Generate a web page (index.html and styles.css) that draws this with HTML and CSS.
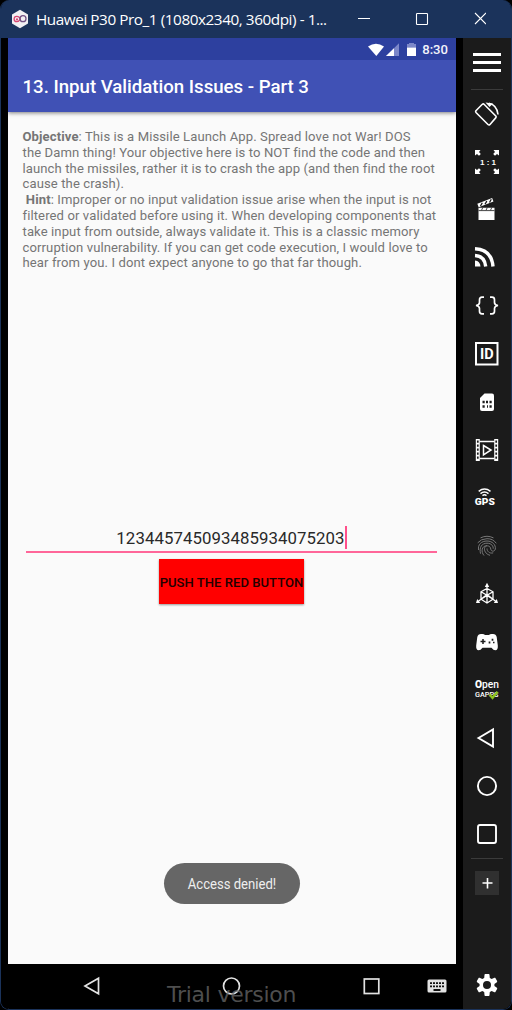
FILE: index.html
```html
<!DOCTYPE html>
<html lang="en">
<head>
<meta charset="utf-8">
<title>Huawei P30 Pro_1</title>
<link rel="stylesheet" href="styles.css">
</head>
<body>
<div class="window">
  <header class="titlebar">
    <svg class="logo" width="20" height="20" viewBox="0 0 20 20"><path d="M10 .8 18 5.4V14.6L10 19.2 2 14.6V5.4Z" fill="#f1f0f3"/><path d="M10.300 10.200C9.500 8 8.500 7.300 6.800 7.300a2.700 2.700 0 0 0 0 5.400c1.500 0 2.500-.8 3.500-2.500" fill="none" stroke="#d84772" stroke-width="1.300"/><circle cx="7" cy="10.400" r="1.100" fill="#d84772"/><circle cx="13" cy="9.700" r="3" fill="none" stroke="#725083" stroke-width="1.300"/></svg>
    <span class="caption">Huawei P30 Pro_1 (1080x2340, 360dpi) - 1...</span>
    <svg class="controls" width="128" height="14" viewBox="0 0 128 14" fill="none" stroke="#fff" stroke-width="1.100"><path d="M0 6.500H12M117 1l11 11M128 1l-11 11"/><rect x="58.500" y="1.500" width="11" height="11" rx=".7"/></svg>
  </header>
  <div class="body">
    <main class="screen">
      <div class="status">
        <svg width="50" height="16" viewBox="0 0 50 16"><path d="M0 3.500Q8-2 16 3.500L8.300 13Z" fill="#fff"/><path d="M18 13 31 .3V13Z" fill="#7c87c9"/><path d="M18 13 26 5.200V13Z" fill="#fff"/><path d="M39 1h2V0h5v1h2v3.500h-9Z" fill="#7c87c9"/><path d="M39 4.500h9V13h-9Z" fill="#fff"/></svg>
        <span class="clock">8:30</span>
      </div>
      <div class="appbar"><span class="apptitle">13. Input Validation Issues - Part 3</span></div>
      <div class="content">
        <p class="copy"><b>Objective</b>: This is a Missile Launch App. Spread love not War! DOS<br>the Damn thing! Your objective here is to NOT find the code and then<br>launch the missiles, rather it is to crash the app (and then find the root<br>cause the crash).<br>&nbsp;<b>Hint</b>: Improper or no input validation issue arise when the input is not<br>filtered or validated before using it. When developing components that<br>take input from outside, always validate it. This is a classic memory<br>corruption vulnerability. If you can get code execution, I would love to<br>hear from you. I dont expect anyone to go that far though.</p>
        <div class="field"><span class="value">123445745093485934075203</span><i class="caret"></i></div>
        <div class="push"><span>PUSH THE RED BUTTON</span></div>
        <div class="toast"><span>Access denied!</span></div>
      </div>
      <nav class="navbar">
        <svg width="448" height="45" viewBox="0 0 448 45" fill="none" stroke="#e2e2e2" stroke-width="1.700"><path d="M77 22 90.500 14.300V29.700Z"/><circle cx="223.500" cy="22" r="8"/><rect x="356.300" y="15" width="14.500" height="14.500"/><rect x="419.500" y="15.500" width="19" height="13" rx="1.500" fill="#e2e2e2" stroke="none"/><path d="M422 19.200h14M422 22.400h14" stroke="#111" stroke-dasharray="2 1"/><path d="M425.500 26h7" stroke="#111" stroke-width="1.800"/></svg>
        <span class="trial">Trial version</span>
      </nav>
    </main>
    <aside class="tools">
      <div class="menu"><svg width="28" height="20" viewBox="0 0 28 20"><path d="M0 0h28v3H0zM0 8h28v3H0zM0 16h28v3H0z" fill="#fff"/></svg></div>
      <div class="tool"><svg viewBox="0 0 24 24"><path d="M.9 8.700 7.300 2.300Q8.300 1.500 9.300 2.500L21 14.200Q21.500 15 20.700 15.900L14.800 22.700Q13.900 23.400 13 22.500L1 10.500Q.3 9.600.9 8.700Z"/><path d="M14 1.300Q22 3 23 12.500"/><path d="M10.500.5 18 1.500 14.500 5Z" fill="#fff" stroke="none"/></svg></div>
      <div class="tool"><svg viewBox="0 0 24 24"><path d="M0 0h5.500L4 2l1.800 2-1.800 1.800L2 4 0 5.500ZM24 0h-5.500L20 2l-1.800 2L20 5.800 22 4l2 1.500ZM0 24h5.500L4 22l1.800-2L4 18.200 2 20l-2-1.500ZM24 24h-5.500L20 22l-1.800-2 1.800-1.800L22 20l2-1.500Z" fill="#fff" stroke="none"/><text class="ratio" x="5" y="15">1 : 1</text></svg></div>
      <div class="tool"><svg viewBox="0 0 24 24"><path d="M3.500 9.700h16V22H3.500Z" fill="#fff" stroke="none"/><path d="M3 7.500 17.800 1.700" stroke-width="3.600"/><path d="m5.500 8 1.800-3.200M10 6.300l1.800-3.200M14.500 4.500 16.300 1.300" stroke="#1b1b1b" stroke-width="1.300"/><path d="m6.500 12.300 1.300-2.800M11 12.300l1.300-2.800M15.500 12.300l1.300-2.800M3.500 12.600h16" stroke="#333" stroke-width=".9"/></svg></div>
      <div class="tool"><svg viewBox="0 0 24 24"><g transform="translate(0 -2)"><g stroke-width="3.400"><path d="M0 4.700Q16.500 5.500 18 22.500M0 11.500Q9.700 12 10.700 22.500"/></g><path d="M0 16.500Q5 17 5.500 22.500H0Z" fill="#fff" stroke="none"/></g></svg></div>
      <div class="tool"><svg viewBox="0 0 24 24"><path d="M9 3.200H7Q4.500 3.200 4.500 5.700V8.500Q4.500 11 1 11.500 4.500 12 4.500 14.500V17.300Q4.500 19.800 7 19.800H9M15 3.200h2Q19.500 3.200 19.500 5.700V8.500q0 2.500 3.500 3Q19.500 12 19.500 14.500v2.800q0 2.500-2.500 2.500H15" stroke-width="1.700"/></svg></div>
      <div class="tool"><svg viewBox="0 0 24 24"><path d="M1 1h21.500v21.500H1Z" stroke-width="2"/><text class="ident" x="4.900" y="17">ID</text></svg></div>
      <div class="tool"><svg viewBox="0 0 24 24"><path d="M9.500 3.500H17Q19 3.500 19 5.500V19Q19 21 17 21H7Q5 21 5 19V8Z" fill="#fff" stroke="none"/><path d="M7.500 12h2.200M11 12h2M14.500 12h2.200M7.500 16.500h2.200M12 16.500h1M14.500 16.500h2.200" stroke="#1d1d1d" stroke-width="2.300"/></svg></div>
      <div class="tool"><svg viewBox="0 0 24 24"><path d="M2.800 1v22M21.200 1v22" stroke-width="4"/><path d="M2.800 2.500v20M21.200 2.500v20" stroke="#1d1d1d" stroke-width="1.700" stroke-dasharray="2.200 1.800"/><path d="M4.500 3.500h15M4.500 20.500h15" stroke-width="1.500"/><path d="M8.500 7.500 16 12l-7.500 4.800Z" stroke-width="1.500"/></svg></div>
      <div class="tool"><svg viewBox="0 0 24 24"><path d="M3.700 5.300Q9.500.7 15.500 5.300M5.500 7.600Q9.500 4.500 13.500 7.600M7.500 9.600q2-1.500 4 0" stroke-width="1.500"/><text class="gps" x="-.2" y="19" textLength="20" lengthAdjust="spacingAndGlyphs">GPS</text></svg></div>
      <div class="tool"><svg viewBox="0 0 24 24" class="finger"><path d="M5.500 3.900Q12 .6 18.500 3.900M2.700 8.800Q6 4.800 12 4.700t9.300 4.600M3.600 16C2.600 10.500 6.500 7 12 7s9 4 8.300 8c-.5 3-4.300 2.700-4.500.2C15.500 11 10 10.700 9.500 14.500 9.200 18 12 20.500 15 21.300M5.500 19.700C4 13 7 9.200 12 9.200s6.500 3.500 6.200 5.500M9 21.500C5.800 18 6.500 11.700 12 11.600M12 14.500c0 3 2.500 5.200 6.200 4.400"/></svg></div>
      <div class="tool"><svg viewBox="0 0 24 24"><path d="M12 4v8.500L2.500 20M12 12.500 21.500 20M6 9.800l6-3.300 6 3.300v7.400L12 21 6 17.200ZM6 9.800l6 3.500 6-3.500M12 13v8M6 17.200l6-3.700 6 3.700" stroke-width="1.300"/><path d="M12 .8 14.200 5H9.800ZM1 21l1.200-4 3 4ZM23 21l-1.200-4-3 4Z" fill="#fff" stroke="none"/></svg></div>
      <div class="tool"><svg viewBox="0 0 24 24"><path d="M6 4Q9 3.500 10 5h4Q15 3.500 18 4 21 4 21.700 7L22.800 15.500Q23.200 20 20.300 20.300 18.500 20.300 16.500 17.700H7.500Q5.500 20.300 3.700 20.300.8 20 1.200 15.500L2.300 7Q3 4 6 4Z" fill="#fff" stroke="none"/><path d="M5.500 11.500h5M8 9v5" stroke="#1d1d1d" stroke-width="1.500"/><path d="M17.500 8.700v2M14.500 11.500v2M18 12.500h1.500" stroke="#1d1d1d" stroke-width="1.700"/></svg></div>
      <div class="tool"><svg viewBox="0 0 24 24"><text class="open" x="0" y="10" textLength="24" lengthAdjust="spacingAndGlyphs"><tspan class="o">O</tspan>pen</text><text class="gapps" x="0" y="18.800" textLength="23.500" lengthAdjust="spacingAndGlyphs">GAPPS</text><path d="m14.500 16.500 3 3.300 5-6" stroke="#8fc31f" stroke-width="2.400"/></svg></div>
      <div class="tool"><svg viewBox="0 0 24 24"><path d="M3.500 12 18 3.500V20.500Z" stroke-width="1.900"/></svg></div>
      <div class="tool"><svg viewBox="0 0 24 24"><circle cx="12" cy="12" r="9.100" stroke-width="1.900"/></svg></div>
      <div class="tool"><svg viewBox="0 0 24 24"><rect x="3" y="3" width="18" height="18" rx="2" stroke-width="1.900"/></svg></div>
      <div class="extra"><svg width="24" height="24" viewBox="0 0 24 24"><path d="M0 0h24v24H0Z" fill="#303030"/><path d="M7.500 12h10M12.500 7v10.500" stroke="#fff" stroke-width="1.600"/></svg></div>
      <div class="settings"><svg width="24" height="24" viewBox="0 0 24 24"><path d="M19.400 13c.1-.7.1-1.300 0-2l2.500-1.800c.4-.3.400-.7.200-1.100l-1.700-3c-.2-.4-.6-.5-1-.3l-2.700 1.200c-.6-.5-1.200-.8-1.900-1L14.500 1.700c0-.4-.4-.7-.8-.7h-3.400c-.4 0-.8.3-.8.700L9.200 5c-.7.200-1.300.5-1.900 1L4.600 4.800c-.4-.2-.8-.1-1 .3l-1.700 3c-.2.400-.2.800.2 1.100L4.600 11c-.1.700-.1 1.300 0 2l-2.500 1.800c-.4.300-.4.700-.2 1.100l1.700 3c.2.400.6.500 1 .3L7.300 18c.6.500 1.200.8 1.900 1l.3 3.300c0 .4.400.7.800.7h3.400c.4 0 .8-.3.800-.7l.3-3.300c.7-.2 1.300-.5 1.900-1l2.700 1.200c.4.200.8.100 1-.3l1.700-3c.2-.4.2-.8-.2-1.100ZM12 8a4 4 0 1 1 0 8 4 4 0 0 1 0-8Z" fill="#fff" fill-rule="evenodd"/></svg></div>
    </aside>
  </div>
</div>
</body>
</html>
```

FILE: styles.css
```css
* { box-sizing: border-box; }
html { background: #000; }
body { margin: 0; width: 512px; height: 1010px; overflow: hidden; background: #000; font-family: Roboto, sans-serif; }
.window { width: 512px; height: 1010px; border: 1px solid #1b335b; border-top: 0; border-radius: 9px; overflow: hidden; display: flex; flex-direction: column; }
.titlebar { height: 38px; flex: none; display: flex; align-items: center; background: #1b335b; padding-left: 9px; color: #fff; }
.logo { flex: none; }
.caption { width: 290px; margin-left: 6px; flex: none; font: 15.3px/20px "Open Sans", "Noto Sans", sans-serif; letter-spacing: -.44px; white-space: nowrap; }
.controls { margin-left: 32px; flex: none; }
.body { flex: 1; min-height: 0; display: flex; justify-content: space-between; padding-left: 7px; background: #000; }
.screen { width: 448px; display: flex; flex-direction: column; background: #fafafa; }
.status { height: 22px; flex: none; display: flex; justify-content: flex-end; align-items: center; padding-right: 8px; gap: 4px; background: #2d409f; color: #f3f4fb; }
.status svg { margin-top: 4px; }
.clock { font-size: 13.1px; font-weight: 500; line-height: 20px; padding-top: 1px; }
.appbar { height: 52px; flex: none; padding: 16px 0 0 14.5px; background: #4051b5; box-shadow: 0 1px 4px rgba(0,0,0,.5); clip-path: inset(0 0 -8px 0); color: #fff; }
.apptitle { display: block; font-size: 18.67px; font-weight: 500; line-height: 23px; letter-spacing: -.02px; white-space: nowrap; }
.content { flex: 1; min-height: 0; display: flex; flex-direction: column; align-items: center; }
.copy { align-self: flex-start; height: 143px; margin: 17px 0 0 14.5px; font-size: 13.07px; line-height: 15.8px; letter-spacing: .107px; white-space: nowrap; color: #757575; }
.copy b { font-weight: 700; }
.field { width: 411px; height: 28px; margin: 253px 1px 0 0; border-bottom: 2px solid #ff6699; display: flex; justify-content: center; }
.value { font-size: 16.8px; line-height: 26px; letter-spacing: .08px; color: #292929; }
.caret { width: 2px; height: 23px; margin-top: 1px; background: #ff4f8b; }
.push { width: 145px; height: 45px; margin: 6px 1px 0 0; display: flex; justify-content: center; align-items: center; background: #f00; box-shadow: 0 1px 2px rgba(0,0,0,.4); font-size: 13.07px; font-weight: 500; color: #240000; white-space: nowrap; }
.push span { letter-spacing: .03px; padding-top: 1px; }
.toast { width: 136px; height: 41px; margin: 259px 1px 0 0; border-radius: 21px; display: flex; align-items: center; justify-content: center; background: #666; color: #eee; }
.toast span { font-size: 14.8px; padding-top: 1px; transform: scaleX(.885); white-space: nowrap; }
.navbar { position: relative; height: 45px; flex: none; background: #000; }
.navbar svg { display: block; }
.trial { position: absolute; left: 159px; top: 16px; font: 22px/30px "DejaVu Sans", sans-serif; letter-spacing: -.25px; color: rgba(105,105,105,.75); white-space: nowrap; }
.tools { width: 48px; display: flex; flex-direction: column; align-items: center; background: #1b1b1b; }
.menu { width: 32px; height: 52px; flex: none; display: flex; justify-content: center; border-bottom: 1px solid #3b3b3b; padding-top: 15px; }
.menu svg { flex: none; }
.tool { height: 48px; flex: none; display: flex; align-items: center; }
.tool svg { width: 24px; height: 24px; fill: none; stroke: #fff; stroke-width: 1.6; overflow: visible; }
.tool text { fill: #fff; stroke: none; font-family: Roboto, sans-serif; }
.tool .ratio { font: 700 8px "Liberation Sans", sans-serif; }
.tool .ident { font-size: 14.5px; font-weight: 700; }
.tool .gps { font: 900 8.3px Roboto, sans-serif; }
.tool .open { font: 500 10px Roboto, sans-serif; }
.tool .o { font-weight: 900; }
.tool .gapps { font: 500 7.6px Roboto, sans-serif; }
.tool .finger { stroke: #777; stroke-width: 1; }
.extra { width: 32px; height: 49px; flex: none; border-top: 1px solid #3b3b3b; display: flex; justify-content: center; align-items: center; }
.settings { margin-top: auto; height: 48px; display: flex; align-items: center; }
```
